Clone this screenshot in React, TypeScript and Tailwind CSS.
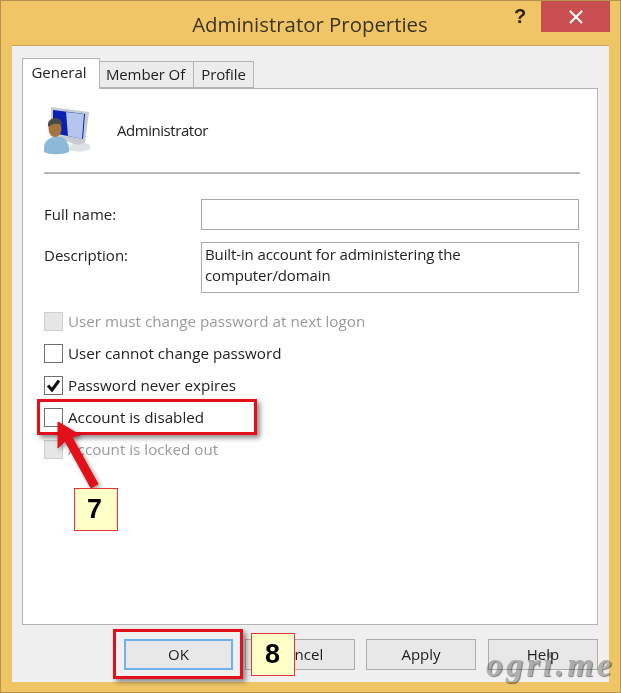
const ui = { fontFamily: '"Open Sans", "Noto Sans", sans-serif' };

function Check({ checked, disabled }: { checked?: boolean; disabled?: boolean }) {
  return (
    <span
      className={`flex h-[19px] w-[19px] shrink-0 items-center justify-center border ${
        disabled ? 'border-[#cfcfcf] bg-[#e6e6e6]' : 'border-[#707070] bg-white'
      }`}
    >
      {checked && (
        <svg width="15" height="15" viewBox="0 0 15 15">
          <path d="M2 7.5 L6 12 L13 2.5" fill="none" stroke="#111" strokeWidth="3" />
        </svg>
      )}
    </span>
  );
}

function CheckRow({ label, checked, disabled }: { label: string; checked?: boolean; disabled?: boolean }) {
  return (
    <div className="flex h-[32px] items-center gap-[5px]">
      <Check checked={checked} disabled={disabled} />
      <span className={`text-[15.2px] ${disabled ? 'text-[#9a9a9a]' : 'text-[#222]'}`}>{label}</span>
    </div>
  );
}

function Btn({ label, focus }: { label: string; focus?: boolean }) {
  return (
    <div
      className={`flex h-[31px] w-[110px] items-center justify-center bg-[#e8e8e8] text-[15px] text-[#222] ${
        focus ? 'border-2 border-[#6fb0ee]' : 'border border-[#adadad]'
      }`}
    >
      {label}
    </div>
  );
}

function UserIcon() {
  return (
    <svg width="48" height="50" viewBox="0 0 48 50" className="blur-[0.5px]">
      <path d="M29 36 L45 38 L47 43 L36 46 L24 44 Z" fill="#dfe2e5" />
      <path d="M7 1 L45 6 L41 37 L34 39 L7 30 Z" fill="#c6ccd2" />
      <path d="M9 4 L41 8 L39 33 L9 27 Z" fill="#0a1fb4" />
      <path d="M22 6 L40 8 L38 33 L24 30 Z" fill="#b4c6ee" />
      <path d="M0 46 C-1 37 3 33 9 31 L17 31 C23 33 26 40 25 46 C18 49 6 49 0 46 Z" fill="#8db9d8" />
      <ellipse cx="11" cy="23" rx="6.5" ry="8" fill="#a5743f" />
      <path d="M4 21 C3 14 8 12 12 12 C16 12 18 15 18 19 C14 17 9 17 4 21 Z" fill="#4a4a46" />
    </svg>
  );
}

export default function App() {
  return (
    <div
      className="relative h-[693px] w-[621px] overflow-hidden border border-[#b5934f] bg-[#efc566] text-[#222]"
      style={ui}
    >
      {/* title bar */}
      <div className="relative flex h-[44px] items-center justify-center pt-[3px]">
        <span className="pr-[1px] text-[20.4px] text-[#3a3322]">Administrator Properties</span>
        <span
          className="absolute left-[513px] top-[3px] text-[20px] font-bold leading-[24px] text-[#2b2414]"
          style={{ fontFamily: '"Liberation Sans", sans-serif' }}
        >
          ?
        </span>
        <div className="absolute left-[540px] top-0 flex h-[31px] w-[69px] items-center justify-center bg-[#c94f50]">
          <svg width="16" height="14" viewBox="0 0 16 14">
            <path d="M2 1 L14 13 M14 1 L2 13" stroke="#fff" strokeWidth="2" />
          </svg>
        </div>
      </div>

      {/* client area */}
      <div className="mx-[11px] h-[637px] border-t border-[#c9a75e] bg-[#f0f0f0] pl-[10px] pr-[11px] blur-[0.3px]">
        {/* tabs */}
        <div className="flex h-[42px] items-end pt-[11px]">
          <div className="z-10 -mb-px flex h-[31px] w-[78px] items-center justify-center border border-b-0 border-[#b4b4b4] bg-white pb-[3px] pr-[4px] text-[15px]">
            General
          </div>
          <div className="flex h-[27px] w-[94px] items-center justify-center border border-l-0 border-[#b4b4b4] bg-[#ececec] pr-[2px] text-[15px] tracking-[-0.1px]">
            Member Of
          </div>
          <div className="flex h-[27px] w-[60px] items-center justify-center border border-l-0 border-[#b4b4b4] bg-[#ececec] text-[15px] tracking-[-0.1px]">
            Profile
          </div>
        </div>

        {/* panel */}
        <div className="h-[537px] border border-[#b4b4b4] bg-white pl-[21px] pr-[17px]">
          <div className="flex h-[83px] items-center">
            <div className="w-[73px] shrink-0">
              <UserIcon />
            </div>
            <span className="text-[15px] tracking-[-0.45px]">Administrator</span>
          </div>
          <div className="h-[2px] bg-[#b9b9b9]" />

          <div className="mt-[25px] flex items-center">
            <span className="w-[157px] text-[15px]">Full name:</span>
            <div className="h-[31px] w-[378px] border border-[#a9a9a9]" />
          </div>
          <div className="mt-[12px] flex items-start">
            <span className="w-[157px] pt-[2px] text-[15px]">Description:</span>
            <div className="h-[51px] w-[378px] border border-[#a9a9a9] px-[3px] pt-[1px] text-[15px] leading-[21px] tracking-[-0.12px]">
              Built-in account for administering the
              <br />
              computer/domain
            </div>
          </div>

          <div className="mt-[12px]">
            <CheckRow label="User must change password at next logon" disabled />
            <CheckRow label="User cannot change password" />
            <CheckRow label="Password never expires" checked />
            <CheckRow label="Account is disabled" />
            <CheckRow label="Account is locked out" disabled />
          </div>
        </div>

        {/* buttons */}
        <div className="mt-[14px] flex pl-[102px]">
          <Btn label="OK" focus />
          <div className="ml-[12px]">
            <Btn label="Cancel" />
          </div>
          <div className="ml-[11px]">
            <Btn label="Apply" />
          </div>
          <div className="ml-[12px]">
            <Btn label="Help" />
          </div>
        </div>
      </div>

      {/* annotations */}
      <div className="absolute left-[36px] top-[398px] h-[36px] w-[220px] border-[3px] border-[#e2101a] shadow-[3px_3px_5px_rgba(0,0,0,0.45)]" />
      <div className="absolute left-[112px] top-[628px] h-[50px] w-[130px] border-[3px] border-[#e2101a] shadow-[3px_3px_5px_rgba(0,0,0,0.45)]" />

      <svg className="absolute left-0 top-0" width="621" height="693" viewBox="0 0 621 693">
        <path
          d="M57 421 L57 447 L64 440 L90 487 L97 483 L71 436 L79 434 Z"
          fill="#e2101a"
          stroke="#e2101a"
          strokeWidth="1"
          style={{ filter: 'drop-shadow(2px 2px 2px rgba(0,0,0,0.4))' }}
        />
      </svg>

      <div
        className="absolute left-[73px] top-[487px] flex h-[43px] w-[44px] items-center justify-center border-[1.5px] border-[#e4333a] bg-[#ffffc8] pr-[3px] text-[27px] font-bold text-black"
        style={{ fontFamily: '"Liberation Sans", sans-serif' }}
      >
        7
      </div>
      <div
        className="absolute left-[250px] top-[632px] flex h-[43px] w-[44px] items-center justify-center border-[1.5px] border-[#e4333a] bg-[#ffffc8] pr-[1px] text-[27px] font-bold text-black"
        style={{ fontFamily: '"Liberation Sans", sans-serif' }}
      >
        8
      </div>

      <div
        className="absolute left-[485px] top-[642px] text-[34px] font-bold italic leading-[44px] tracking-[3.2px] text-[#bcbcbc] mix-blend-multiply [text-shadow:1px_1px_1px_#8a8a8a]"
        style={{ fontFamily: '"Liberation Serif", serif' }}
      >
        ogri.me
      </div>
    </div>
  );
}
